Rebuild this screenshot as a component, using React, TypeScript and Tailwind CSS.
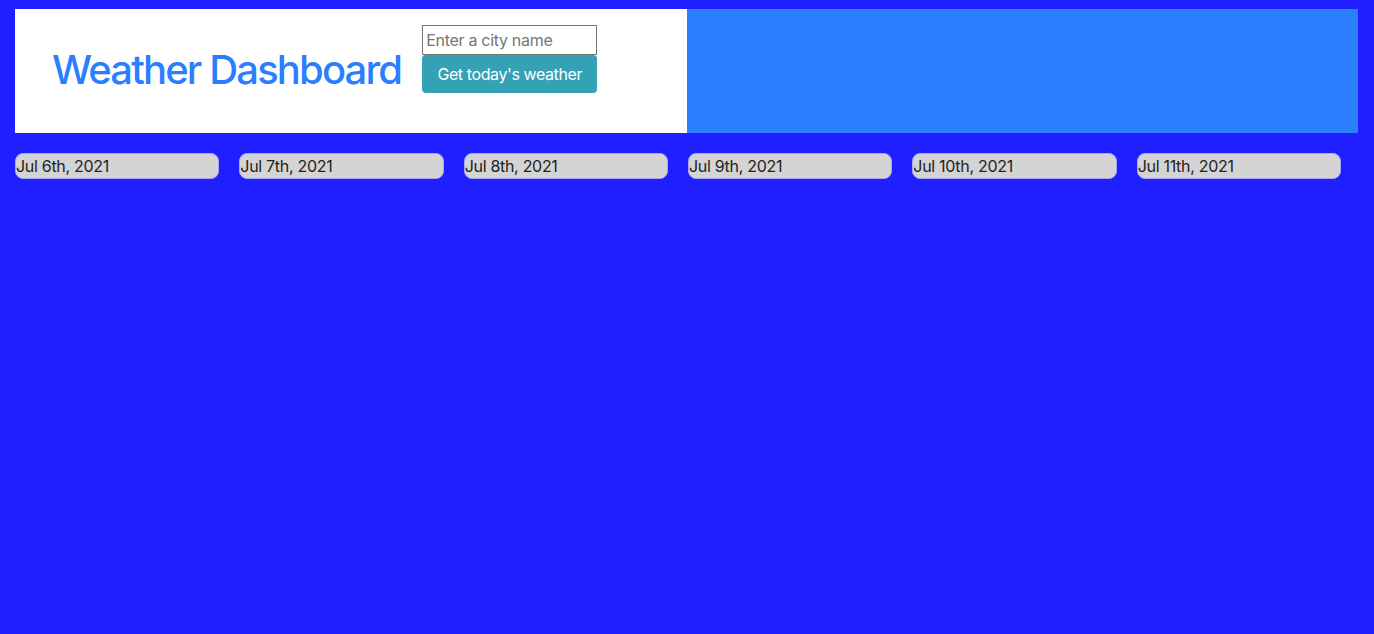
const days = [
  "Jul 6th, 2021",
  "Jul 7th, 2021",
  "Jul 8th, 2021",
  "Jul 9th, 2021",
  "Jul 10th, 2021",
  "Jul 11th, 2021",
];

const App = () => {
  return (
    <main className="min-h-screen w-full bg-[#1f1fff] px-[15px] pt-[9px] font-['Inter','Liberation_Sans',sans-serif]">
      <header className="grid grid-cols-2 w-[1343px] h-[124px]">
        <div className="flex items-start bg-white pl-[37px]">
          <h1 className="mt-[41px] text-[40px] leading-none font-medium tracking-[-1.85px] text-[#2b7fff]">
            Weather Dashboard
          </h1>
          <form className="flex flex-col ml-[21px] mt-[16px] w-[175px]">
            <input
              type="text"
              placeholder="Enter a city name"
              className="h-[30px] border border-[#767676] px-[3px] text-[16px] tracking-[-0.3px] text-[#222] placeholder:text-[#757575] bg-white"
            />
            <button
              type="button"
              className="h-[38px] rounded-[4px] bg-[#35a1b5] text-[16px] tracking-[-0.4px] text-white"
            >
              Get today's weather
            </button>
          </form>
        </div>
        <div className="bg-[#2b7fff]" />
      </header>
      <section className="grid grid-cols-6 w-[1346px] mt-[20px]">
        {days.map((day) => (
          <div key={day} className="pr-[20px]">
            <div className="h-[26px] rounded-[8px] border border-[#a7a7ef] bg-[#d4d4d4] text-[16px] leading-[24px] text-[#222] tracking-[-0.3px]">
              {day}
            </div>
          </div>
        ))}
      </section>
    </main>
  );
};

export default App;
